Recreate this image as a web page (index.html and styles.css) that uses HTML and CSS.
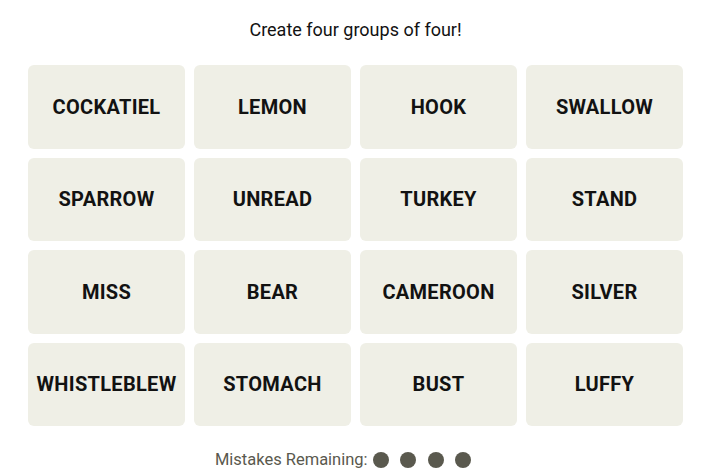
FILE: index.html
```html
<!DOCTYPE html>
<html>
<head>
<meta charset="utf-8">
<link rel="stylesheet" href="styles.css">
</head>
<body>
<main class="game">
  <p class="prompt">Create four groups of four!</p>
  <div class="board">
    <div class="tile">COCKATIEL</div>
    <div class="tile">LEMON</div>
    <div class="tile">HOOK</div>
    <div class="tile">SWALLOW</div>
    <div class="tile">SPARROW</div>
    <div class="tile">UNREAD</div>
    <div class="tile">TURKEY</div>
    <div class="tile">STAND</div>
    <div class="tile">MISS</div>
    <div class="tile">BEAR</div>
    <div class="tile">CAMEROON</div>
    <div class="tile">SILVER</div>
    <div class="tile">WHISTLEBLEW</div>
    <div class="tile">STOMACH</div>
    <div class="tile">BUST</div>
    <div class="tile">LUFFY</div>
  </div>
  <div class="mistakes">
    <span class="mistakes-label">Mistakes Remaining:</span>
    <span class="dots">
      <span class="dot"></span><span class="dot"></span><span class="dot"></span><span class="dot"></span>
    </span>
  </div>
</main>
</body>
</html>
```
FILE: styles.css
```css
html, body {
  margin: 0;
  padding: 0;
  background: #ffffff;
}
.game {
  width: 655px;
  margin-left: 28px;
  display: flex;
  flex-direction: column;
  align-items: center;
  font-family: Roboto, "Liberation Sans", sans-serif;
}
.prompt {
  margin: 18px 0 0 0;
  height: 47px;
  font-size: 18px;
  line-height: 24px;
  color: #121212;
}
.board {
  width: 655px;
  display: grid;
  grid-template-columns: repeat(4, 157px);
  grid-auto-rows: 83.5px;
  gap: 9px;
}
.tile {
  background: #efefe6;
  border-radius: 6px;
  display: flex;
  align-items: center;
  justify-content: center;
  font-weight: 700;
  font-size: 20px;
  letter-spacing: 0.3px;
  color: #121212;
}
.mistakes {
  margin-top: 24px;
  margin-right: 25px;
  display: flex;
  align-items: center;
  gap: 5px;
  font-size: 16.5px;
  color: #5a594e;
}
.dots {
  display: flex;
  gap: 11.5px;
}
.dot {
  width: 16px;
  height: 16px;
  border-radius: 50%;
  background: #5a594e;
}
```
